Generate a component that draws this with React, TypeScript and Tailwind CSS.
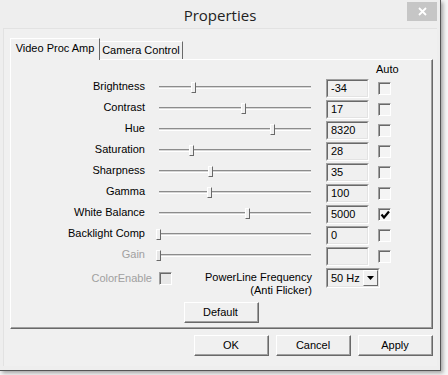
import React from "react";

const font = { fontFamily: '"Liberation Sans", Arial, sans-serif' };

function Sunken({ className = "", children }: { className?: string; children?: React.ReactNode }) {
  return (
    <div className={`border-t border-l border-[#a0a0a0] border-r border-b border-r-white border-b-white ${className}`}>
      <div className="w-full h-full border-t border-l border-[#696969] border-r border-b border-r-[#e3e3e3] border-b-[#e3e3e3] flex items-center">
        {children}
      </div>
    </div>
  );
}

function Raised({ className = "", children }: { className?: string; children?: React.ReactNode }) {
  return (
    <div className={`border-t border-l border-white border-r border-b border-r-[#696969] border-b-[#696969] bg-[#f0f0f0] ${className}`}>
      <div className="w-full h-full border-r border-b border-[#a0a0a0] flex items-center justify-center text-[11px] text-black">
        {children}
      </div>
    </div>
  );
}

function Slider({ pos, disabled }: { pos: number; disabled?: boolean }) {
  return (
    <div className="relative w-[162px] h-[21px] flex items-center px-[5px]">
      <div className="w-full h-[3px] border-t border-[#8c8c8c] border-b border-b-white bg-[#d6d6d6]" />
      <div
        className={`absolute top-[5px] w-[5px] h-[11px] border-t border-l border-white border-r border-b border-r-[#696969] border-b-[#696969] ${disabled ? "bg-[#e6e6e6]" : "bg-[#f0f0f0]"}`}
        style={{ left: pos }}
      />
    </div>
  );
}

function Check({ checked, disabled }: { checked?: boolean; disabled?: boolean }) {
  return (
    <div className={`w-[13px] h-[13px] border-t border-l border-[#a0a0a0] border-r border-b border-r-white border-b-white`}>
      <div className={`w-full h-full border-t border-l border-[#696969] ${disabled ? "bg-[#e8e8e8]" : "bg-[#f4f4f4]"} flex items-center justify-center`}>
        {checked && (
          <svg width="10" height="10" viewBox="0 0 10 10">
            <path d="M1.5 4.5 L4 7.5 L9 1.5" stroke="#000" strokeWidth="2.2" fill="none" />
          </svg>
        )}
      </div>
    </div>
  );
}

const rows: { label: string; pos: number; value: string; checked?: boolean; disabled?: boolean }[] = [
  { label: "Brightness", pos: 37, value: "-34" },
  { label: "Contrast", pos: 87, value: "17" },
  { label: "Hue", pos: 116, value: "8320" },
  { label: "Saturation", pos: 35, value: "28" },
  { label: "Sharpness", pos: 54, value: "35" },
  { label: "Gamma", pos: 53, value: "100" },
  { label: "White Balance", pos: 91, value: "5000", checked: true },
  { label: "Backlight Comp", pos: 2, value: "0" },
  { label: "Gain", pos: 2, value: "", disabled: true },
];

export default function App() {
  return (
    <div className="w-[448px] h-[375px] bg-[#f6f6f6] overflow-hidden" style={font}>
      <div className="w-[441px] h-[371px] bg-[#eeeeee] border-r border-b border-[#555555] shadow-[2px_2px_4px_rgba(0,0,0,0.35)] flex flex-col">
        {/* title bar */}
        <div className="relative h-[28px] flex items-center justify-center">
          <span className="text-[15px] text-[#222] mt-[2px]" style={{ fontFamily: '"Open Sans", "Noto Sans", sans-serif' }}>
            Properties
          </span>
          <div className="absolute right-[3px] top-[2px] w-[30px] h-[19px] bg-[#c6c6c6] flex items-center justify-center">
            <svg width="9" height="9" viewBox="0 0 9 9">
              <path d="M1 1 L8 8 M8 1 L1 8" stroke="#fff" strokeWidth="1.8" />
            </svg>
          </div>
        </div>
        {/* client */}
        <div className="flex-1 ml-[3px] mr-[3px] mb-[4px] bg-[#f0f0f0] border-l border-t border-[#e2e2e2] flex flex-col pl-[6px] pt-[8px]">
          {/* tabs */}
          <div className="flex items-end h-[22px]">
            <div className="h-[22px] w-[90px] border-t border-l border-white border-r border-r-[#696969] bg-[#f0f0f0] flex items-center justify-center text-[11px] pb-[3px] relative z-10 -mb-[1px]">
              Video Proc Amp
            </div>
            <div className="h-[18px] w-[83px] border-t border-white border-r border-r-[#696969] flex items-center justify-center text-[11px]">
              Camera Control
            </div>
          </div>
          {/* panel */}
          <div className="w-[423px] h-[270px] border-t border-l border-white border-r border-b border-r-[#696969] border-b-[#696969]">
            <div className="w-full h-full border-r border-b border-[#a0a0a0] flex flex-col text-[11px] text-black">
              <div className="h-[18px] flex pt-[3px]">
                <div className="ml-[365px] leading-[13px]">Auto</div>
              </div>
              {rows.map((r) => (
                <div key={r.label} className="h-[21px] flex items-center">
                  <div className={`w-[134px] text-right leading-[13px] -mt-[5px] ${r.disabled ? "text-[#a0a0a0]" : ""}`}>{r.label}</div>
                  <div className="ml-[9px] -mt-[3px]">
                    <Slider pos={r.pos} disabled={r.disabled} />
                  </div>
                  <Sunken className="ml-[10px] w-[43px] h-[19px]">
                    <span className="pl-[3px] leading-[13px]">{r.value}</span>
                  </Sunken>
                  <div className="ml-[9px] -mt-[1px]">
                    <Check checked={r.checked} />
                  </div>
                </div>
              ))}
              <div className="flex mt-[1px] h-[30px]">
                <div className="w-[141px] text-right text-[#a0a0a0] leading-[13px] pt-[4px]">ColorEnable</div>
                <div className="ml-[7px] pt-[4px]">
                  <Check disabled />
                </div>
                <div className="w-[140px] text-right leading-[13px] pt-[3px]">
                  <div>PowerLine Frequency</div>
                  <div>(Anti Flicker)</div>
                </div>
                <Sunken className="ml-[14px] w-[54px] h-[20px]">
                  <span className="pl-[3px] leading-[13px] flex-1">50 Hz</span>
                  <div className="w-[15px] h-full border-t border-l border-white border-r border-b border-r-[#696969] border-b-[#696969] bg-[#f0f0f0] flex items-center justify-center">
                    <svg width="7" height="4" viewBox="0 0 7 4">
                      <path d="M0 0 H7 L3.5 4 Z" fill="#000" />
                    </svg>
                  </div>
                </Sunken>
              </div>
              <div className="flex justify-center mt-[4px]">
                <Raised className="w-[75px] h-[21px]">Default</Raised>
              </div>
            </div>
          </div>
          {/* bottom buttons */}
          <div className="flex justify-end gap-[7px] mt-[6px] w-[423px]">
            <Raised className="w-[75px] h-[21px]">OK</Raised>
            <Raised className="w-[75px] h-[21px]">Cancel</Raised>
            <Raised className="w-[75px] h-[21px]">Apply</Raised>
          </div>
        </div>
      </div>
    </div>
  );
}
